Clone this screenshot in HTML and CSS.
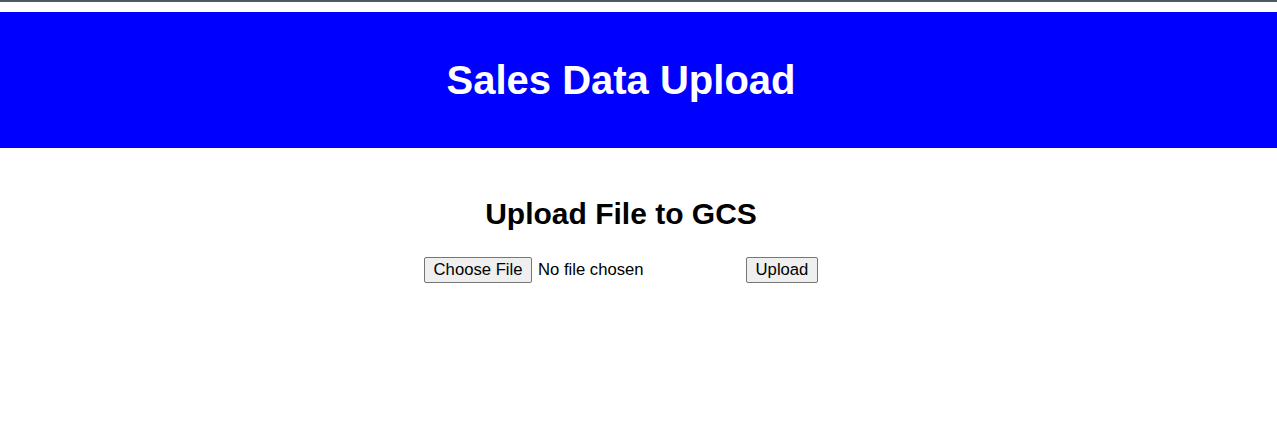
FILE: index.html
```html
<!DOCTYPE html>
<html lang="en">
<head>
<meta charset="utf-8">
<title>Sales Data Upload</title>
<link rel="stylesheet" href="styles.css">
</head>
<body>
<div class="topbar"></div>
<header class="site-header">
  <h1 class="site-title">Sales Data Upload</h1>
</header>
<main class="main">
  <h2 class="section-title">Upload File to GCS</h2>
  <form class="upload-form">
    <label class="file-picker">
      <input type="file" class="file-input" name="file">
      <span class="btn">Choose File</span>
      <span class="file-name">No file chosen</span>
    </label>
    <button type="submit" class="btn">Upload</button>
  </form>
</main>
</body>
</html>
```

FILE: styles.css
```css
html, body {
  margin: 0;
  padding: 0;
  background: #ffffff;
  color: #000000;
  font-family: "Liberation Sans", Arial, sans-serif;
}

.topbar {
  height: 2px;
  background: #4b5961;
  margin-bottom: 10px;
}

.site-header {
  background: #0000ff;
  padding: 45px 35px 45px 0;
  text-align: center;
}

.site-title {
  margin: 0;
  color: #ffffff;
  font-size: 40px;
  line-height: 46px;
  font-weight: bold;
}

.main {
  padding: 49px 35px 0 0;
  text-align: center;
}

.section-title {
  margin: 0 0 26px;
  font-size: 30px;
  line-height: 34px;
  font-weight: bold;
}

.upload-form {
  display: flex;
  justify-content: center;
  align-items: center;
  gap: 5px;
  font-size: 16.67px;
}

.file-picker {
  display: flex;
  align-items: center;
  gap: 6px;
  width: 317px;
  cursor: default;
}

.file-input {
  display: none;
}

.btn {
  box-sizing: border-box;
  height: 26px;
  padding: 0 8.5px;
  display: inline-flex;
  align-items: center;
  border: 1px solid #767676;
  border-radius: 2px;
  background: #efefef;
  color: #000000;
  font-family: "Liberation Sans", Arial, sans-serif;
  font-size: 16.67px;
  line-height: 1;
  white-space: nowrap;
}

.file-name {
  white-space: nowrap;
}
```
